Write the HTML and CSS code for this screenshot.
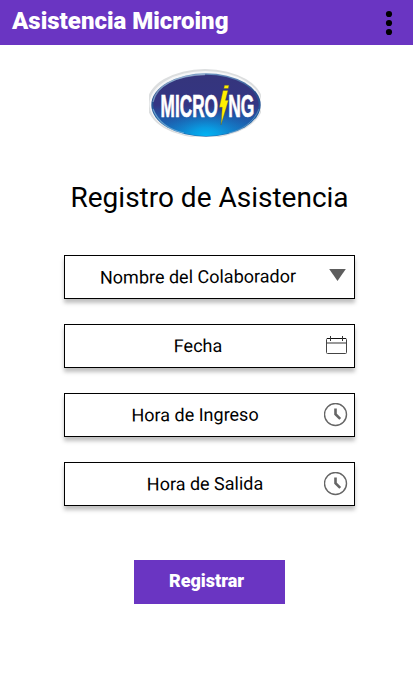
FILE: index.html
```html
<!DOCTYPE html>
<html lang="es">
<head>
<meta charset="utf-8">
<title>Asistencia Microing</title>
<link rel="stylesheet" href="styles.css">
</head>
<body>
<header class="bar">
  <h1 class="bar-title">Asistencia Microing</h1>
  <svg class="menu" width="8" height="26" viewBox="0 0 8 26"><circle cx="4" cy="4" r="3.1"/><circle cx="4" cy="13" r="3.1"/><circle cx="4" cy="22" r="3.1"/></svg>
</header>
<main class="content">
  <svg class="logo" width="114" height="70" viewBox="148 68 114 70">
    <defs>
      <linearGradient id="blue" x1="0" y1="0" x2="0" y2="1">
        <stop offset="0" stop-color="#35357c"/><stop offset=".5" stop-color="#343583"/><stop offset=".7" stop-color="#2055a5"/><stop offset="1" stop-color="#1577c4"/>
      </linearGradient>
      <radialGradient id="glow" cx=".5" cy="1" r=".45">
        <stop offset="0" stop-color="#00b5f5"/><stop offset=".3" stop-color="#06a3e8" stop-opacity=".85"/><stop offset="1" stop-color="#1577c4" stop-opacity="0"/>
      </radialGradient>
      <linearGradient id="rim" x1="0" y1="0" x2="0" y2="1">
        <stop offset="0" stop-color="#6b92bf"/><stop offset=".3" stop-color="#264c8b"/><stop offset="1" stop-color="#246eb0"/>
      </linearGradient>
      <clipPath id="frame"><rect x="149" y="69" width="112" height="68"/></clipPath>
    </defs>
    <g clip-path="url(#frame)">
      <ellipse cx="205" cy="103.500" rx="58" ry="34.500" fill="#dcdedf"/>
      <ellipse cx="205.500" cy="104" rx="56" ry="33" fill="#f5f6f7"/>
      <ellipse cx="206" cy="105" rx="54.700" ry="31.700" fill="url(#rim)"/>
      <ellipse cx="206" cy="105" rx="52.700" ry="30.300" fill="url(#blue)"/>
      <ellipse cx="206" cy="105" rx="53" ry="31" fill="url(#glow)"/>
      <path d="M153 102C156 86 176 75 205 74.500" fill="none" stroke="#c4d7ea" stroke-width="1.300" opacity=".5"/>
      <path d="M153 109C158 122 170 130 184 133" fill="none" stroke="#8fc6e8" stroke-width="1.200" opacity=".6"/>
      <path d="M259 109C254 122 242 130 229 133" fill="none" stroke="#8fc6e8" stroke-width="1" opacity=".4"/>
    </g>
    <text class="logo-text" transform="translate(160.600 117) scale(.538 1)">MICRO</text>
    <text class="logo-text" transform="translate(228.200 117) scale(.545 1)">NG</text>
    <path d="M224.500 85.300H229L228.300 88.500H223.800ZM223 90.500H228L225.500 100.300H228.500L221 125L222.200 107.300H219.300Z" fill="#fff000" stroke="#5b5c31" stroke-width=".4"/>
  </svg>
  <h2 class="heading">Registro de Asistencia</h2>
  <form class="form">
    <div class="field name"><span class="label">Nombre del Colaborador</span>
      <svg class="icon" width="24" height="24" viewBox="0 0 24 24"><path d="M5.200 4H21.800L13.500 16Z" fill="#5d5d5d"/></svg></div>
    <div class="field date"><span class="label">Fecha</span>
      <svg class="icon" width="24" height="24" viewBox="0 0 24 24" fill="none"><rect x="2.500" y="4.500" width="20" height="15" rx="1" stroke="#444"/><path d="M3 4.500H22" stroke="#111"/><path d="M3 9H22" stroke="#777" stroke-width="1.500"/><path d="M6.500 2V7M18.500 2V7" stroke="#333"/></svg></div>
    <div class="field entry"><span class="label">Hora de Ingreso</span>
      <svg class="icon" width="24" height="24" viewBox="0 0 24 24" fill="none" stroke="#666"><circle cx="11.500" cy="11.500" r="11" stroke-width="1.400"/><path d="M11.500 5.500V11.200L16.200 15.900" stroke-width="2.600"/></svg></div>
    <div class="field exit"><span class="label">Hora de Salida</span>
      <svg class="icon" width="24" height="24" viewBox="0 0 24 24" fill="none" stroke="#666"><circle cx="11.500" cy="11.500" r="11" stroke-width="1.400"/><path d="M11.500 5.500V11.200L16.200 15.900" stroke-width="2.600"/></svg></div>
    <button class="submit" type="button">Registrar</button>
  </form>
</main>
</body>
</html>
```
FILE: styles.css
```css
* { box-sizing: border-box; }
body { margin: 0; min-height: 689px; background: #fff; color: #000; font-family: Roboto, sans-serif; }
.bar { height: 45px; padding: 0 20px 3px 12px; display: flex; align-items: center; justify-content: space-between; background: #6a35c2; }
.bar-title { margin: 0; color: #fff; font-size: 24px; line-height: 28px; font-weight: 900; }
.menu { margin-top: 4px; }
.content { display: flex; flex-direction: column; padding-top: 23px; }
.logo { display: block; margin-left: 148px; }
.logo-text { fill: #fff; stroke: #fff; stroke-width: .7px; font: 700 32px "Liberation Sans", sans-serif; }
.heading { margin: 43px 0 0 70.500px; font-size: 28px; line-height: 33px; font-weight: 400; white-space: nowrap; }
.form { width: 291px; margin: 41px 0 0 64px; display: flex; flex-direction: column; gap: 25px; }
.field { height: 44px; padding: 0 6px 0 30px; display: flex; align-items: center; border: 1px solid #000; background: #fff; box-shadow: 0 4px 4px rgba(0, 0, 0, .25); }
.label { flex: 1; padding-bottom: 2px; text-align: center; font-size: 18px; line-height: 21px; white-space: nowrap; transform: rotate(-.4deg); }
.name, .date { padding-left: 7px; }
.entry { padding-left: 1px; }
.exit { padding-left: 21px; }
.icon { flex: none; }
.submit { width: 151px; height: 44px; margin: 29px 0 0 70px; padding: 0 6px 3px 0; border: 0; background: #6a35c2; color: #fff; font: 900 18px/21px Roboto, sans-serif; }
```
